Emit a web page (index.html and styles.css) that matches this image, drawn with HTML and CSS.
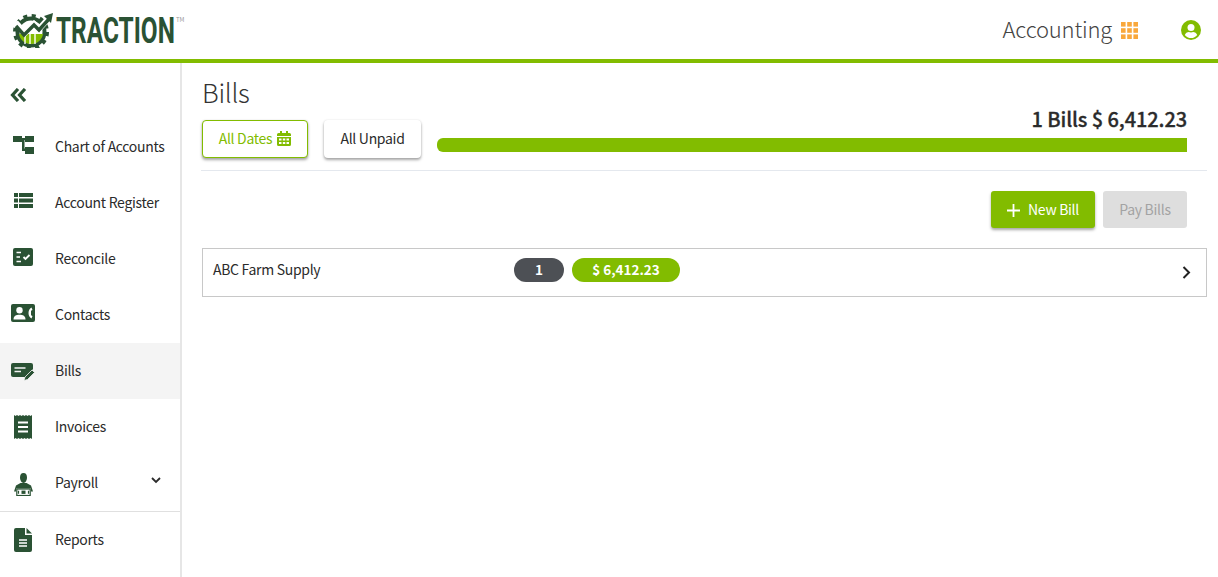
FILE: index.html

```html
<!DOCTYPE html>
<html lang="en">
<head>
  <meta charset="UTF-8" />
  <meta name="viewport" content="width=device-width, initial-scale=1.0"/>
  <title>Traction - Bills</title>
  <link rel="stylesheet" href="styles.css">
</head>
<body>
  <header class="topbar">
    <div class="logo">
      <svg class="logo-mark" viewBox="0 0 44 36" width="44" height="36">
        <circle cx="20" cy="20" r="13.5" fill="none" stroke="#2a5234" stroke-width="4"/>
        <circle cx="20" cy="20" r="16" fill="none" stroke="#2a5234" stroke-width="4" stroke-dasharray="4 4.4"/>
        <path d="M8 22h24c-1 6-6 10-12 10S9 28 8 22z" fill="#82bc00"/>
        <path d="M14 21v11M19 19v13M24 17v15" stroke="#fff" stroke-width="1.4"/>
        <path d="M2 13l4-1 8 9 9-9 5 5 10-11" fill="none" stroke="#fff" stroke-width="6"/>
        <path d="M5 14l8 9 10-10 5 5 10-11" fill="none" stroke="#2a5234" stroke-width="3.4"/>
        <path d="M33 4l9-3-2 10z" fill="#2a5234"/>
      </svg>
      <svg class="logo-word" viewBox="0 0 177 30" preserveAspectRatio="none" width="120" height="30">
        <text x="0" y="28">TRACTION</text>
      </svg>
      <span class="logo-tm">TM</span>
    </div>
    <div class="topbar-right">
      <span class="app-name">Accounting</span>
      <svg class="apps-icon" viewBox="0 0 17 17" width="17" height="17" fill="#f9a83c">
        <rect x="0" y="0" width="4.6" height="4.6"/><rect x="6.2" y="0" width="4.6" height="4.6"/><rect x="12.4" y="0" width="4.6" height="4.6"/>
        <rect x="0" y="6.2" width="4.6" height="4.6"/><rect x="6.2" y="6.2" width="4.6" height="4.6"/><rect x="12.4" y="6.2" width="4.6" height="4.6"/>
        <rect x="0" y="12.4" width="4.6" height="4.6"/><rect x="6.2" y="12.4" width="4.6" height="4.6"/><rect x="12.4" y="12.4" width="4.6" height="4.6"/>
      </svg>
      <svg class="user-icon" viewBox="0 0 20 20" width="20" height="20">
        <circle cx="10" cy="10" r="10" fill="#82bc00"/>
        <circle cx="10" cy="7.6" r="3.5" fill="#fff"/>
        <path d="M3.8 15c1-2.4 3-3 4-3 1.400.5 3 .5 4.400 0 1 0 3 .6 4 3-1.500 2-3.700 3.100-6.200 3.100S5.300 17 3.800 15z" fill="#fff"/>
      </svg>
    </div>
  </header>

  <div class="layout">
    <nav class="sidebar">
      <div class="collapse">
        <svg viewBox="0 0 17 14" width="17" height="14" fill="none" stroke="#2a5234" stroke-width="3.2">
          <path d="M8 1L2.500 7 8 13M15 1L9.500 7 15 13"/>
        </svg>
      </div>

      <a class="nav-item">
        <span class="nav-icon raised">
          <svg viewBox="0 0 21 18" width="21" height="18" fill="#2a5234">
            <path d="M0 0h9v6H0zM12 0h9v6h-9zM12 11h9v7h-9z"/>
            <path d="M9 2h3v2h-.5v8.500H12v2.500H9V4H9z"/>
          </svg>
        </span>
        <span class="nav-label">Chart of Accounts</span>
      </a>
      <a class="nav-item">
        <span class="nav-icon raised">
          <svg viewBox="0 0 19 15" width="19" height="15" fill="#2a5234">
            <path d="M0 0h4v4H0zM5 0h14v4H5zM0 5.500h4v4H0zM5 5.500h14v4H5zM0 11h4v4H0zM5 11h14v4H5z"/>
          </svg>
        </span>
        <span class="nav-label">Account Register</span>
      </a>
      <a class="nav-item">
        <span class="nav-icon raised">
          <svg viewBox="0 0 20 18" width="20" height="18">
            <rect width="20" height="18" rx="2" fill="#2a5234"/>
            <path d="M3.500 4.500h4.500M3.500 9h3.500M3.500 13.500h4.500" stroke="#fff" stroke-width="1.600"/>
            <path d="M10.500 9l2 2 4-4" fill="none" stroke="#fff" stroke-width="1.800"/>
          </svg>
        </span>
        <span class="nav-label">Reconcile</span>
      </a>
      <a class="nav-item">
        <span class="nav-icon raised">
          <svg viewBox="0 0 24 18" width="24" height="18">
            <rect width="24" height="18" rx="2" fill="#2a5234"/>
            <circle cx="8.500" cy="6.300" r="3.200" fill="#fff"/>
            <path d="M2.500 15.500c0-3.500 2.500-4.800 6-4.800s6 1.300 6 4.800z" fill="#fff"/>
            <path d="M20.500 3.500c-2 1-3 3.300-3 5.500s1 4.500 3 5.500l1-2.500-1.500-.8v-4.400l1.500-.8z" fill="#fff"/>
          </svg>
        </span>
        <span class="nav-label">Contacts</span>
      </a>
      <a class="nav-item active">
        <span class="nav-icon lowered">
          <svg viewBox="0 0 24 18" width="24" height="18">
            <path d="M2 0h18a2 2 0 0 1 2 2v4l-7 8H2a2 2 0 0 1-2-2V2a2 2 0 0 1 2-2z" fill="#2a5234"/>
            <path d="M3.500 5h11M3.500 8.500h6.500" stroke="#f4f4f4" stroke-width="1.600"/>
            <path d="M13 17.500l1-3.500 7-7 2.500 2.500-7 7z" fill="#2a5234" stroke="#f4f4f4" stroke-width=".8"/>
          </svg>
        </span>
        <span class="nav-label">Bills</span>
      </a>
      <a class="nav-item">
        <span class="nav-icon">
          <svg viewBox="0 0 18 24" width="18" height="24">
            <path d="M0 0l1.500 1L3 0l1.500 1L6 0l1.500 1L9 0l1.500 1L12 0l1.500 1L15 0l1.500 1L18 0v24l-1.500-1-1.500 1-1.500-1-1.500 1-1.500-1L9 24l-1.500-1L6 24l-1.500-1L3 24l-1.500-1L0 24z" fill="#2a5234"/>
            <path d="M4 7.500h10M4 12h10M4 16.500h10" stroke="#fff" stroke-width="1.800"/>
          </svg>
        </span>
        <span class="nav-label">Invoices</span>
      </a>
      <a class="nav-item">
        <span class="nav-icon lowered">
          <svg viewBox="0 0 19 23" width="19" height="23" fill="#2a5234">
            <path d="M9.500 0c2.500 0 3.500 2 3.500 4.500S11.500 10 9.500 10 6 7 6 4.500 7 0 9.500 0z"/>
            <path d="M6.500 10h6l4.500 2.500 2 6h-2v-3H2v3H0l2-6z"/>
            <rect x="2.800" y="16" width="13.400" height="6.500" fill="#fff" stroke="#2a5234" stroke-width="1.200"/>
            <rect x="7.500" y="17.600" width="4" height="3.300"/>
            <path d="M4.500 17.800v3M14.500 17.800v3" stroke="#2a5234" stroke-width="1.200"/>
          </svg>
        </span>
        <span class="nav-label">Payroll</span>
        <svg class="nav-caret" viewBox="0 0 10 7" width="10" height="7" fill="none" stroke="#2b2b2b" stroke-width="1.800">
          <path d="M1 1l4 4 4-4"/>
        </svg>
      </a>
      <a class="nav-item reports">
        <span class="nav-icon">
          <svg viewBox="0 0 18 24" width="18" height="24" fill="#2a5234">
            <path d="M2 0h9v7h7v15a2 2 0 0 1-2 2H2a2 2 0 0 1-2-2V2a2 2 0 0 1 2-2z"/>
            <path d="M12.500 0L18 5.500h-5.500z"/>
            <path d="M5 12h8M5 15h8M5 18h8" stroke="#fff" stroke-width="1.500"/>
          </svg>
        </span>
        <span class="nav-label">Reports</span>
      </a>
    </nav>

    <main class="content">
      <div class="page-head">
        <div class="page-head-left">
          <h1 class="page-title">Bills</h1>
          <div class="filters">
            <button class="filter-btn selected">
              All Dates
              <svg viewBox="0 0 14 15" width="14" height="15" fill="#82bc00">
                <path d="M3 0h2v2h4V0h2v2h1.500A1.500 1.500 0 0 1 14 3.500V5H0V3.500A1.500 1.500 0 0 1 1.500 2H3z"/>
                <path fill-rule="evenodd" d="M0 6h14v7.500a1.500 1.500 0 0 1-1.500 1.500h-11A1.500 1.500 0 0 1 0 13.500zM2 7.500v2h2.500v-2zM5.800 7.500v2h2.500v-2zM9.500 7.500v2H12v-2zM2 11v2h2.500v-2zM5.800 11v2h2.500v-2zM9.500 11v2H12v-2z"/>
              </svg>
            </button>
            <button class="filter-btn">All Unpaid</button>
          </div>
        </div>
        <div class="summary">
          <div class="summary-text">1 Bills $ 6,412.23</div>
          <div class="progress"></div>
        </div>
      </div>

      <div class="actions">
        <button class="action-btn primary">
          <svg viewBox="0 0 13 13" width="13" height="13" stroke="#fff" stroke-width="1.800"><path d="M6.500 0v13M0 6.500h13"/></svg>
          New Bill
        </button>
        <button class="action-btn disabled">Pay Bills</button>
      </div>

      <div class="bill-row">
        <span class="vendor">ABC Farm Supply</span>
        <span class="pill count">1</span>
        <span class="pill amount">$ 6,412.23</span>
        <svg class="row-chevron" viewBox="0 0 9 13" width="9" height="13" fill="none" stroke="#222" stroke-width="2">
          <path d="M1.500 1l5.500 5.500-5.500 5.500"/>
        </svg>
      </div>
    </main>
  </div>
</body>
</html>
```

FILE: styles.css

```css
* {
  box-sizing: border-box;
}
body {
  margin: 0;
  height: 100vh;
  overflow: hidden;
  background: #fff;
  color: #2b2b2b;
  font-family: "Noto Sans CJK SC", "Noto Sans", sans-serif;
  font-size: 14px;
  letter-spacing: -0.3px;
}

/* top bar */
.topbar {
  display: flex;
  justify-content: space-between;
  align-items: center;
  height: 63px;
  border-bottom: 4px solid #82bc00;
  padding: 0 17px 0 11px;
}
.logo {
  display: flex;
  align-items: center;
}
.logo-mark {
  margin-right: 1px;
}
.logo-word {
  margin-top: 1px;
  overflow: visible;
}
.logo-word text {
  font-family: "Roboto", sans-serif;
  font-weight: 700;
  font-size: 36px;
  letter-spacing: 0;
  fill: #2a5234;
}
.logo-tm {
  align-self: flex-start;
  margin: 4px 0 0 0;
  font-size: 6px;
  line-height: 8px;
  letter-spacing: 0;
  color: #999;
}
.topbar-right {
  display: flex;
  align-items: center;
}
.app-name {
  font-size: 22px;
  font-weight: 300;
  letter-spacing: -0.2px;
  color: #444;
  margin-bottom: 4px;
}
.apps-icon {
  margin: 2px 43px 0 9px;
}

/* side nav */
.layout {
  display: flex;
  height: 514px;
}
.sidebar {
  width: 182px;
  flex-shrink: 0;
  border-right: 2px solid #e6e6e6;
}
.collapse {
  height: 56px;
  padding: 25px 0 0 10px;
}
.collapse svg {
  display: block;
}
.nav-item {
  display: flex;
  align-items: center;
  height: 56px;
  padding-right: 19px;
  padding-bottom: 1px;
  white-space: nowrap;
  color: #2b2b2b;
}
.nav-item.active {
  background: #f4f4f4;
}
.nav-item.reports {
  border-top: 1px solid #e0e0e0;
  height: 57px;
}
.nav-label {
  padding-bottom: 2px;
}
.nav-icon {
  display: flex;
  justify-content: center;
  flex-shrink: 0;
  width: 46px;
  margin-right: 9px;
}
.nav-icon.raised {
  margin-top: -4px;
}
.nav-icon.lowered {
  margin-top: 3px;
}
.nav-caret {
  margin: -4px 0 0 auto;
}

/* main area */
.content {
  flex: 1;
  padding: 0 11px 0 20px;
}
.page-head {
  display: flex;
  align-items: flex-end;
  gap: 16px;
  margin-left: -1px;
  padding: 0 20px 12px 1px;
  border-bottom: 1px solid #e4e8ee;
}
.page-title {
  margin: 11px 0 0;
  font-size: 26px;
  font-weight: 300;
  letter-spacing: -0.3px;
  line-height: 36px;
  color: #333;
}
.filters {
  display: flex;
  gap: 16px;
  margin-top: 10px;
}
.filter-btn {
  display: flex;
  align-items: center;
  justify-content: center;
  gap: 5px;
  height: 38px;
  width: 97px;
  padding: 0 0 2px;
  border: 1px solid transparent;
  border-radius: 4px;
  background: #fff;
  box-shadow: 0 2px 3px rgba(0, 0, 0, 0.35), 0 0 2px rgba(0, 0, 0, 0.1);
  font: inherit;
  letter-spacing: inherit;
  color: #2b2b2b;
}
.filter-btn.selected {
  width: 106px;
  border-color: #82bc00;
  color: #82bc00;
}
.summary {
  flex: 1;
  padding-bottom: 6px;
}
.summary-text {
  text-align: right;
  font-size: 20px;
  font-weight: 500;
  -webkit-text-stroke: 0.3px #2b2b2b;
  letter-spacing: -0.1px;
  line-height: 28px;
  margin-bottom: 5px;
}
.progress {
  height: 14px;
  background: #82bc00;
  border-radius: 6px 0 0 6px;
}
.actions {
  display: flex;
  justify-content: flex-end;
  gap: 8px;
  margin-top: 20px;
  padding-right: 20px;
}
.action-btn {
  display: flex;
  align-items: center;
  justify-content: center;
  height: 37px;
  width: 84px;
  padding: 0 0 2px;
  border: 0;
  border-radius: 3px;
  font: inherit;
  letter-spacing: inherit;
}
.action-btn.primary {
  width: 104px;
  gap: 8px;
  background: #82bc00;
  color: #fff;
  box-shadow: 0 2px 3px rgba(0, 0, 0, 0.35);
}
.action-btn.primary svg {
  margin-top: 4px;
}
.action-btn.disabled {
  background: #dedede;
  color: #a3a3a3;
}
.bill-row {
  display: flex;
  align-items: center;
  height: 49px;
  margin-top: 20px;
  padding: 0 15px 5px 10px;
  border: 1px solid #c8c8c8;
}
.vendor {
  width: 301px;
  padding-bottom: 2px;
}
.pill {
  display: flex;
  justify-content: center;
  align-items: center;
  height: 24px;
  padding-bottom: 2px;
  border-radius: 12px;
  color: #fff;
  font-weight: 700;
  letter-spacing: 0;
  font-size: 13.5px;
}
.pill.count {
  width: 50px;
  margin-right: 8px;
  background: #4d5055;
}
.pill.amount {
  width: 108px;
  background: #82bc00;
}
.row-chevron {
  margin: 4px 0 0 auto;
}
```
